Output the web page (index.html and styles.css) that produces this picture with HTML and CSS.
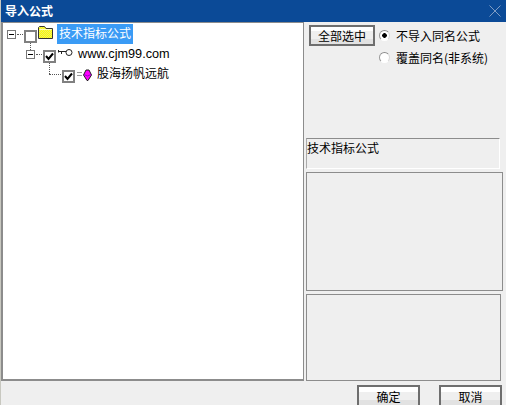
FILE: index.html
```html
<!DOCTYPE html>
<html lang="zh-CN">
<head>
    <meta charset="UTF-8">
    <meta name="viewport" content="width=device-width, initial-scale=1.0">
    <title>导入公式</title>
    <link rel="stylesheet" href="styles.css">
</head>
<body>
    <div class="dialog">
        <div class="titlebar">
            <span class="title">导入公式</span>
            <svg class="close" width="12" height="12" viewBox="0 0 12 12"><path d="M0.5 0.5L11.5 11.5M11.5 0.5L0.5 11.5" stroke="#7f9cc4" stroke-width="1" fill="none"/></svg>
        </div>
        <div class="content">
            <div class="tree">
                <div class="tree-row row-root">
                    <span class="expander"></span>
                    <span class="dots"></span>
                    <span class="check"></span>
                    <svg class="icon-folder" width="15" height="13" viewBox="0 0 15 13">
                        <defs>
                            <pattern id="dither" width="2" height="2" patternUnits="userSpaceOnUse">
                                <rect width="2" height="2" fill="#ffff00"/>
                                <rect width="1" height="1" fill="#ecec70"/>
                                <rect x="1" y="1" width="1" height="1" fill="#ecec70"/>
                            </pattern>
                        </defs>
                        <path d="M0.5 12.5V1.5L1.5 0.5H6.5L8 2.5H14.5V12.5Z" fill="url(#dither)" stroke="#333" stroke-width="1"/>
                        <path d="M1.5 3.5H13.5" stroke="#ffffc0" stroke-width="1"/>
                    </svg>
                    <span class="label selected">技术指标公式</span>
                </div>
                <div class="tree-row row-site">
                    <span class="expander"></span>
                    <span class="dots"></span>
                    <span class="check"><svg width="9" height="9" viewBox="0 0 9 9"><path d="M1 4L3.5 7L8 1.5" stroke="#000" stroke-width="2" fill="none"/></svg></span>
                    <svg class="icon-key" width="15" height="7" viewBox="0 0 15 7">
                        <path d="M0.5 1V3.5M0.5 2.5H8M3.5 2.5V5" stroke="#222" stroke-width="1" fill="none"/>
                        <circle cx="11" cy="3.5" r="3" fill="#fff" stroke="#222" stroke-width="1"/>
                    </svg>
                    <span class="label">www.cjm99.com</span>
                </div>
                <div class="tree-row row-leaf">
                    <span class="elbow"></span>
                    <span class="check"><svg width="9" height="9" viewBox="0 0 9 9"><path d="M1 4L3.5 7L8 1.5" stroke="#000" stroke-width="2" fill="none"/></svg></span>
                    <svg class="icon-gem" width="15" height="12" viewBox="0 0 15 12">
                        <path d="M0 3.5H5M0 6.5H5" stroke="#999" stroke-width="1"/>
                        <path d="M6.5 6L9 1H12L14.5 6L11 11.5H10Z" fill="#f0f" stroke="#222" stroke-width="1"/>
                        <path d="M7 5.5L10.5 7L14 5.5" stroke="#90c" stroke-width="1" fill="none"/>
                    </svg>
                    <span class="label">股海扬帆远航</span>
                </div>
            </div>
            <div class="side">
                <div class="options">
                    <button class="btn btn-all">全部选中</button>
                    <div class="radios">
                        <div class="radio-row"><span class="radio on"></span>不导入同名公式</div>
                        <div class="radio-row"><span class="radio"></span>覆盖同名(非系统)</div>
                    </div>
                </div>
                <div class="panel panel-name">技术指标公式</div>
                <div class="panel panel-mid"></div>
                <div class="panel panel-low"></div>
            </div>
        </div>
        <div class="footer">
            <button class="btn btn-foot">确定</button>
            <button class="btn btn-foot">取消</button>
        </div>
    </div>
</body>
</html>
```

FILE: styles.css
```css
html, body {
    margin: 0;
    padding: 0;
    overflow: hidden;
}
body {
    width: 506px;
    height: 405px;
    background-color: #efefef;
    font-family: "Noto Sans CJK SC", "Liberation Sans", sans-serif;
    font-size: 12px;
    color: #000;
}
.dialog {
    height: 405px;
    display: flex;
    flex-direction: column;
    overflow: hidden;
    border-left: 1px solid #c8c8c0;
    box-sizing: border-box;
}
.titlebar {
    flex: none;
    height: 22px;
    margin-left: -1px;
    background-color: #0b4a97;
    display: flex;
    align-items: center;
    justify-content: space-between;
    padding: 0 5px 0 5px;
}
.title {
    color: #fff;
    font-size: 12px;
    font-weight: bold;
    line-height: 20px;
}
.content {
    flex: none;
    height: 359px;
    display: flex;
}
.tree {
    width: 303px;
    box-sizing: border-box;
    background-color: #fff;
    border-left: 2px solid #8c8c8c;
    border-top: 1px solid #8c8c8c;
    border-right: 1px solid #8c8c8c;
    border-bottom: 2px solid #8c8c8c;
    padding-top: 1px;
}
.tree-row {
    position: relative;
    height: 20px;
    display: flex;
    align-items: flex-start;
}
.row-root { padding-left: 4px; }
.row-site { padding-left: 23px; }
.row-leaf { padding-left: 46px; }
.expander {
    width: 9px;
    height: 9px;
    box-sizing: border-box;
    margin-top: 6px;
    border: 1px solid #777;
    background: linear-gradient(#000, #000) center / 5px 1px no-repeat #fff;
    flex: none;
}
.dots {
    width: 6px;
    margin: 10px 1px 0;
    border-top: 1px dotted #555;
    flex: none;
}
.check {
    width: 13px;
    height: 13px;
    box-sizing: border-box;
    margin-top: 6px;
    border: 2px solid #808080;
    background-color: #fff;
    flex: none;
    display: flex;
    align-items: center;
    justify-content: center;
    overflow: hidden;
}
.check svg {
    flex: none;
}
/* connectors between rows sit over the tree background */
.row-root::after {
    content: "";
    position: absolute;
    left: 27px;
    top: 19px;
    height: 7px;
    border-left: 1px dotted #555;
}
.row-site::after {
    content: "";
    position: absolute;
    left: 46px;
    top: 19px;
    height: 11px;
    border-left: 1px dotted #555;
}
.elbow {
    width: 12px;
    margin: 10px 1px 0 0;
    border-top: 1px dotted #555;
    flex: none;
}
.icon-folder {
    margin: 2px 0 0 1px;
    flex: none;
}
.icon-key {
    margin: 5px 0 0 2px;
    flex: none;
}
.icon-gem {
    margin: 5px 0 0 2px;
    flex: none;
}
.label {
    font-size: 12px;
    line-height: 20px;
    white-space: nowrap;
    margin-left: 5px;
}
.row-root .label { margin-left: 4px; }
.row-site .label {
    font-size: 12.7px;
    font-family: "Liberation Sans", sans-serif;
}
.row-leaf .label { margin-top: -1px; }
.selected {
    background-color: #3a9bf5;
    color: #fff;
    padding: 0 2px;
    line-height: 18px;
    height: 20px;
}
.side {
    flex: 1;
    display: flex;
    flex-direction: column;
    padding-left: 2px;
}
.options {
    height: 116px;
    display: flex;
    align-items: flex-start;
    padding: 3px 0 0 3px;
    box-sizing: border-box;
}
.btn {
    font-family: inherit;
    font-size: 12px;
    color: #000;
    padding: 0;
    border: 2px solid #6e6e6e;
    background: linear-gradient(#fff 0, #fff 25%, #efefef 26%, #efefef 70%, #e2e2e2 71%);
    box-sizing: border-box;
}
.btn-all {
    width: 66px;
    height: 21px;
    flex: none;
}
.radios {
    margin: -1px 0 0 4px;
    display: flex;
    flex-direction: column;
}
.radio-row {
    height: 22px;
    display: flex;
    align-items: center;
    white-space: nowrap;
}
.radio {
    width: 11px;
    height: 11px;
    box-sizing: border-box;
    border-radius: 50%;
    border: 1px solid;
    border-color: #8a8a8a #d8d8d8 #fff #9a9a9a;
    background-color: #fff;
    margin-right: 6px;
    flex: none;
}
.radio.on {
    background: radial-gradient(circle, #000 0, #000 2px, #fff 2.6px);
}
.panel {
    box-sizing: border-box;
    border: 1px solid #8c8c8c;
    margin-bottom: 3px;
}
.panel-name {
    width: 194px;
    height: 31px;
    border-left-color: #aaa;
    border-right-color: #fff;
    border-bottom-color: #fff;
    line-height: 17px;
}
.panel-mid {
    width: 197px;
    height: 119px;
}
.panel-low {
    width: 195px;
    height: 87px;
    margin-bottom: 0;
}
.footer {
    flex: 1;
    display: flex;
    justify-content: flex-end;
    gap: 19px;
    padding: 4px 4px 0 0;
}
.btn-foot {
    width: 63px;
    height: 22px;
    flex: none;
}
```
